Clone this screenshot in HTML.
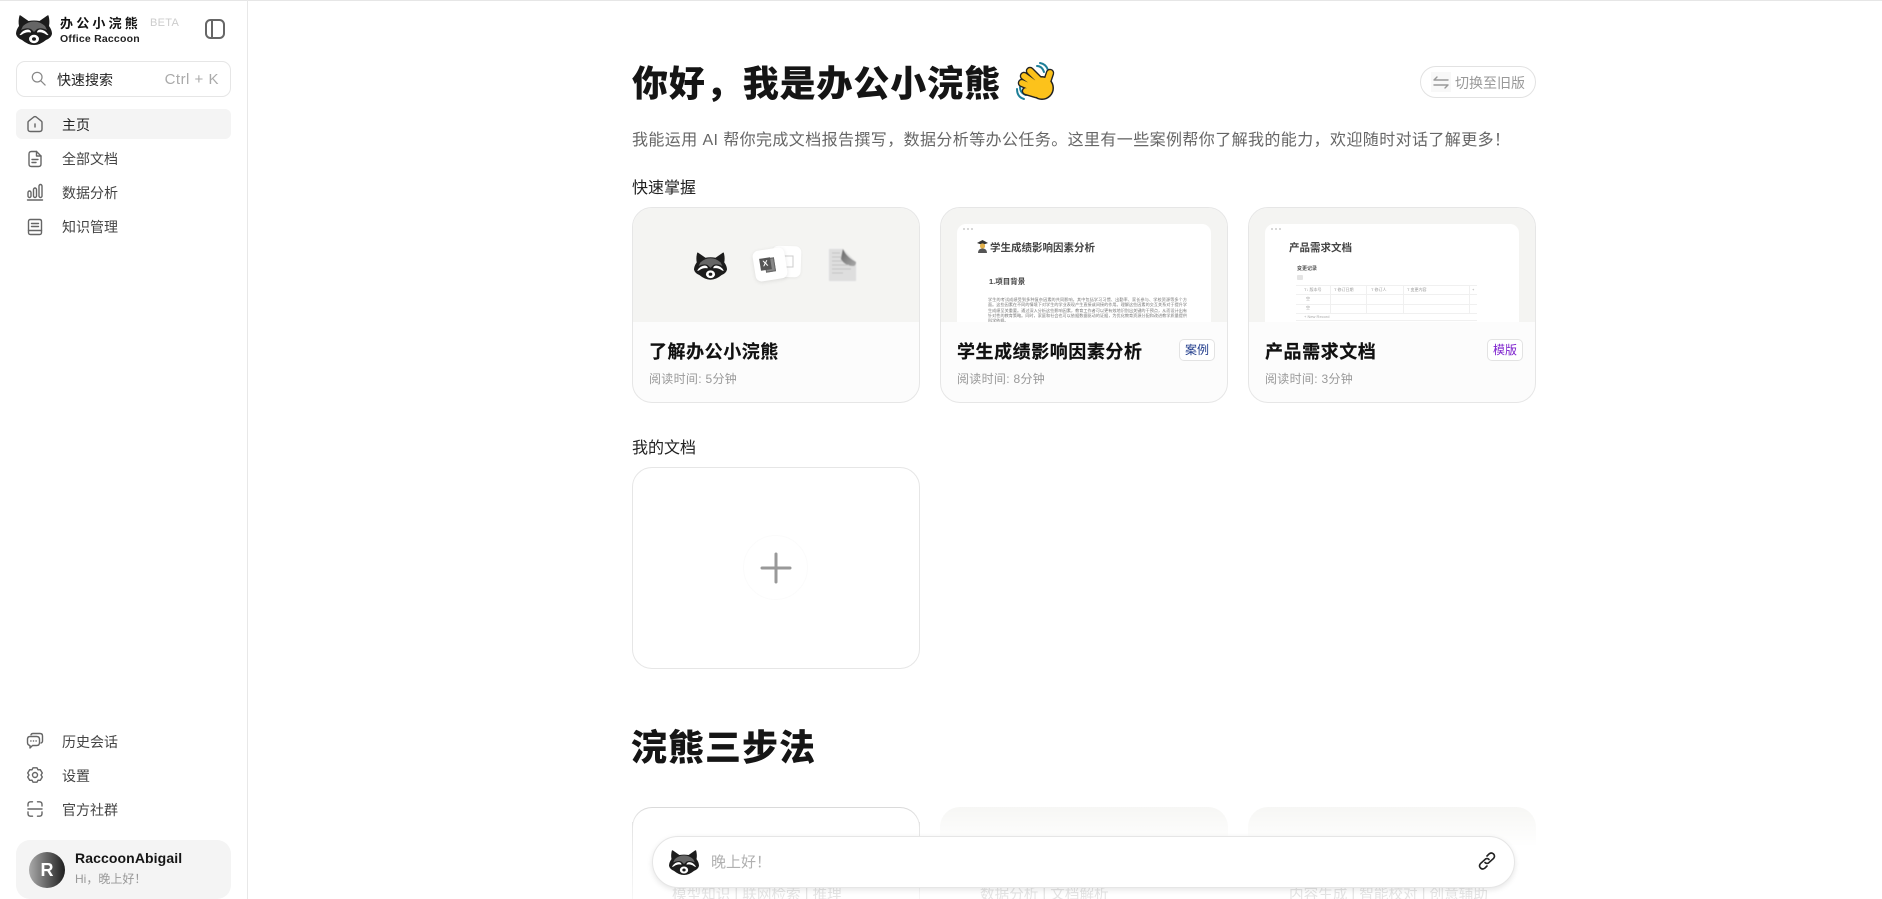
<!DOCTYPE html>
<html lang="zh"><head><meta charset="utf-8"><title>办公小浣熊</title>
<style>
*{box-sizing:border-box;margin:0;padding:0}
html,body{width:1882px;height:899px;overflow:hidden;background:#fff}
body{position:relative;font-family:"Liberation Sans","Noto Sans CJK SC",sans-serif;color:#1a1a1a}
.a{position:absolute}
.t{position:absolute;white-space:nowrap;line-height:20px}
.nav{font-size:14px;color:#444;left:62px}
.ic{position:absolute;fill:none;stroke:#666;stroke-width:1.4;stroke-linecap:round;stroke-linejoin:round}
.card{position:absolute;width:288px;height:196px;top:207px;border:1px solid #e6e6e6;border-radius:20px;overflow:hidden;background:#fcfcfc}
.img{position:absolute;left:0;top:0;width:100%;height:114px;background:#f4f4f2;overflow:hidden}
.ct{position:absolute;left:16px;top:133px;font-size:18px;font-weight:700;line-height:22px;white-space:nowrap;color:#111;letter-spacing:.55px;-webkit-text-stroke:.2px #111}
.cs{position:absolute;left:16px;top:162px;font-size:12px;color:#999;line-height:18px;white-space:nowrap;letter-spacing:.3px}
.tag{position:absolute;top:131px;height:22px;width:36px;border:1px solid #e3e3e3;border-radius:5px;background:#fff;font-size:12px;line-height:20px;text-align:center}
.paper{position:absolute;left:16px;top:16px;width:254px;height:98px;background:#fff;border-radius:9px 9px 0 0;overflow:hidden}
.dots{position:absolute;left:6px;top:4px;width:14px;height:3px}
.dots i{display:inline-block;width:2px;height:2px;border-radius:50%;background:#ccc;margin-right:2px;vertical-align:top}
.p{position:absolute;font-size:4.1px;line-height:5.3px;color:#777;filter:blur(.25px)}
.mini{position:absolute;font-size:4px;color:#999;white-space:nowrap;line-height:6px;filter:blur(.2px)}
.ln{position:absolute;background:#f0f0f0}
.h1{font-weight:900;color:#151515}
</style></head><body>
<svg width="0" height="0" style="position:absolute"><defs>
<symbol id="rac" viewBox="0 0 36 30">
<path d="M3.5 .5Q4 0 5 .8L12.500 6Q18 5 23.500 6L31 .8Q32 0 32.500 .5Q34 6 33 11Q36 15 36 19Q35 23 30 25Q24 30 18 30Q12 30 6 25Q1 23 0 19Q0 15 3 11Q2 6 3.500 .5Z" fill="#1c1c1c"/>
<path d="M7 11Q12 6.500 18 6.500Q24 6.500 29 11L31 15Q25 12 21 14L18 17L15 14Q11 12 5 15Z" fill="#666"/>
<path d="M3.500 20Q7 14.500 12 14.500Q15 15 15 17.500Q10 16.500 6 19.500Q4.500 20.500 3.500 20Z M32.500 20Q29 14.500 24 14.500Q21 15 21 17.500Q26 16.500 30 19.500Q31.500 20.500 32.500 20Z" fill="#fff"/>
<ellipse cx="18" cy="24" rx="5" ry="4.200" fill="#fff"/><ellipse cx="18" cy="24" rx="2" ry="1.800" fill="#1c1c1c"/>
</symbol></defs></svg>

<div class="a" style="left:0;top:0;width:1882px;height:1px;background:#e6e6e6"></div>
<div class="a" style="left:247px;top:0;width:1px;height:899px;background:#e8e8e8"></div>

<!-- sidebar -->
<svg class="a" style="left:16px;top:15px" width="36" height="30"><use href="#rac"/></svg>
<div class="t" style="left:60px;top:14px;font-size:13px;font-weight:700;letter-spacing:3.2px;color:#111">办公小浣熊</div>
<div class="t" style="left:60px;top:29px;font-size:10.5px;font-weight:700;letter-spacing:.2px;color:#222">Office Raccoon</div>
<div class="t" style="left:150px;top:13px;font-size:11px;letter-spacing:.3px;color:#ccc">BETA</div>
<svg class="ic" style="left:204px;top:18px;stroke-width:2" width="22" height="22" viewBox="0 0 22 22"><rect x="2" y="2" width="18" height="18" rx="4.500"/><path d="M8 2V20"/></svg>

<div class="a" style="left:16px;top:61px;width:215px;height:36px;border:1px solid #e6e6e6;border-radius:9px"></div>
<svg class="ic" style="left:31px;top:71px;stroke:#888" width="15" height="15" viewBox="0 0 17 17"><circle cx="7" cy="7" r="5.500"/><path d="M11 11L16 16"/></svg>
<div class="t" style="left:57px;top:70px;font-size:14px;color:#222">快速搜索</div>
<div class="t" style="right:1663px;top:70px;font-size:15px;color:#aaa;letter-spacing:.5px">Ctrl + K</div>

<div class="a" style="left:16px;top:109px;width:215px;height:30px;background:#f4f4f4;border-radius:6px"></div>
<svg class="ic" style="left:26px;top:115px" width="18" height="18" viewBox="0 0 18 18"><path d="M2 7.500Q2 6.500 3 5.800L7.800 2Q9 1.200 10.200 2L15 5.800Q16 6.500 16 7.500V14Q16 16.500 13.500 16.500H4.500Q2 16.500 2 14Z"/><path d="M9 9V12"/></svg>
<div class="t nav" style="top:115px;color:#222">主页</div>
<svg class="ic" style="left:26px;top:150px" width="18" height="18" viewBox="0 0 18 18"><path d="M3 4Q3 1.500 5.500 1.500H10.500L15 6V14Q15 16.500 12.500 16.500H5.500Q3 16.500 3 14Z"/><path d="M10.500 1.500V6H15"/><path d="M6 9.500H12M6 12.500H10"/></svg>
<div class="t nav" style="top:149px">全部文档</div>
<svg class="ic" style="left:26px;top:183px" width="18" height="18" viewBox="0 0 18 18"><rect x="2" y="8" width="3" height="6.500" rx="1.500"/><rect x="7.500" y="5" width="3" height="9.500" rx="1.500"/><rect x="13" y="1.500" width="3" height="13" rx="1.500"/><path d="M1.500 17H16.500"/></svg>
<div class="t nav" style="top:183px">数据分析</div>
<svg class="ic" style="left:26px;top:218px" width="18" height="18" viewBox="0 0 18 18"><path d="M4.500 1.500H13.500Q15.500 1.500 15.500 3.500V14.500Q15.500 16.500 13.500 16.500H4.500Q2.500 16.500 2.500 14.500V3.500Q2.500 1.500 4.500 1.500Z"/><path d="M5.500 5.500H12.500M5.500 8.500H12.500M2.500 12.500H15.500"/></svg>
<div class="t nav" style="top:217px">知识管理</div>

<svg class="ic" style="left:26px;top:732px" width="18" height="18" viewBox="0 0 18 18"><path d="M5 2.800Q5.500 1.500 7 1.500H14Q16.500 1.500 16.500 4V9Q16.500 10.500 15 11"/><path d="M4 4.500H10.500Q13.500 4.500 13.500 7.500V10.500Q13.500 13.500 10.500 13.500H6.500L4 16V13.500Q1.500 13 1.500 10.500V7.500Q1.500 4.500 4 4.500Z"/><path d="M4.800 9H5M7.400 9H7.600M10 9H10.200"/></svg>
<div class="t nav" style="top:732px">历史会话</div>
<svg class="ic" style="left:26px;top:766px" width="18" height="18" viewBox="0 0 18 18"><path d="M7 1.800H11L12 3.800L14.300 3.700L16.300 7L15 9L16.300 11L14.300 14.300L12 14.200L11 16.200H7L6 14.200L3.700 14.300L1.700 11L3 9L1.700 7L3.700 3.700L6 3.800Z"/><circle cx="9" cy="9" r="2.500"/></svg>
<div class="t nav" style="top:766px">设置</div>
<svg class="ic" style="left:26px;top:800px" width="18" height="18" viewBox="0 0 18 18"><path d="M2 6V4.500Q2 1.800 4.500 1.800H6.500M11.500 1.800H13.500Q16 1.800 16 4.500V6M2 12V13.500Q2 16.200 4.500 16.200H6.500M11.500 16.200H13.500Q16 16.200 16 13.500V12M2 9H16"/></svg>
<div class="t nav" style="top:800px">官方社群</div>

<div class="a" style="left:16px;top:840px;width:215px;height:59px;background:#f4f4f4;border-radius:14px"></div>
<div class="a" style="left:29px;top:852px;width:36px;height:36px;border-radius:50%;background:linear-gradient(90deg,#aaa,#1f1f1f);color:#fff;font-weight:700;font-size:18px;line-height:36px;text-align:center">R</div>
<div class="t" style="left:75px;top:848px;font-size:14px;font-weight:700;letter-spacing:.1px;color:#151515">RaccoonAbigail</div>
<div class="t" style="left:75px;top:869px;font-size:12px;color:#999">Hi，晚上好！</div>

<!-- main -->
<div class="t h1" style="left:632px;top:63px;font-size:36px;line-height:42px;letter-spacing:.9px">你好，我是办公小浣熊</div>
<svg class="a" style="left:1008px;top:55px" width="60" height="55" viewBox="0 0 60 55" fill="none" stroke-linecap="round">
<path d="M29 11Q34 11 36 17M32 8Q38 9 40 15M12 32Q12 38 18 40M9 34Q9 42 16 44" stroke="#1d7f98" stroke-width="2"/>
<g stroke="#222" stroke-width="8.500"><path d="M22 16L34 28M16 21L30 31M14 28L28 34M18 36L28 39M42 18L38 30"/></g>
<circle cx="34" cy="33" r="12" fill="#222"/>
<circle cx="34" cy="33" r="10.500" fill="#fcc21b"/>
<g stroke="#fcc21b" stroke-width="5.800"><path d="M22 16L34 28M16 21L30 31M14 28L28 34M18 36L28 39M42 18L38 30"/></g>
</svg>
<div class="a" style="left:1420px;top:66px;width:116px;height:32px;border:1px solid #e2e2e2;border-radius:16px"></div>
<div class="a" style="left:1431px;top:72px;width:20px;height:20px;background:#f8f8f8"></div>
<svg class="ic" style="left:1433px;top:74px;stroke:#999" width="16" height="16" viewBox="0 0 16 16"><path d="M1 6H15M1 6L4 3M1 11H15M15 11L12 14"/></svg>
<div class="t" style="left:1455px;top:73px;font-size:14px;color:#999">切换至旧版</div>

<div class="t" style="left:632px;top:131px;font-size:16px;color:#666;letter-spacing:.4px">我能运用 AI 帮你完成文档报告撰写，数据分析等办公任务。这里有一些案例帮你了解我的能力，欢迎随时对话了解更多！</div>
<div class="t" style="left:632px;top:179px;font-size:16px;color:#222">快速掌握</div>

<div class="card" style="left:632px">
 <div class="img">
  <svg class="a" style="left:61px;top:44px" width="33" height="28"><use href="#rac"/></svg>
  <div class="a" style="left:139px;top:38px;width:29px;height:31px;background:#fff;border-radius:6px;transform:rotate(2deg);box-shadow:0 1px 3px rgba(0,0,0,.06)"></div>
  <svg class="a" style="left:150px;top:47px" width="12" height="13" viewBox="0 0 12 13" fill="none" stroke="#ccc"><rect x="1" y="1" width="9" height="11"/></svg>
  <div class="a" style="left:121px;top:41px;width:32px;height:31px;background:#fff;border-radius:6px;transform:rotate(-9deg);box-shadow:0 1px 4px rgba(0,0,0,.1)"></div>
  <div class="a" style="left:132px;top:50px;width:10px;height:14px;background:#888;transform:rotate(-9deg);border:1px solid #666"></div>
  <div class="a" style="left:127px;top:50px;width:11px;height:12px;background:#555;color:#fff;font:700 8px/12px 'Liberation Sans',sans-serif;text-align:center;transform:rotate(-9deg)">X</div>
  <svg class="a" style="left:196px;top:41px;filter:blur(.4px)" width="27" height="32" viewBox="0 0 27 32"><defs><linearGradient id="dg" x1="0" x2="1" y1="0" y2="1"><stop offset="0" stop-color="#666"/><stop offset="1" stop-color="#aaa"/></linearGradient></defs><path d="M0 0H14L27 13V32H0Z" fill="#dedede"/><path d="M14 0Q17 8 27 13Q27 16 25 17Q16 17 12 10Q13 4 14 0Z" fill="url(#dg)"/><path d="M3 4H11M3 8H12M3 12H13M3 16H20M3 20H22M3 24H14" stroke="#c4c4c4" stroke-width="1"/></svg>
 </div>
 <div class="ct">了解办公小浣熊</div>
 <div class="cs">阅读时间: 5分钟</div>
</div>

<div class="card" style="left:940px">
 <div class="img">
  <div class="paper"><div class="dots"><i></i><i></i><i></i></div>
   <svg class="a" style="left:20px;top:16px;filter:blur(.3px)" width="11" height="13" viewBox="0 0 11 13"><path d="M0 3L5.500 0L11 3L5.500 5Z" fill="#333"/><circle cx="5.500" cy="6" r="2.600" fill="#e2b04a"/><path d="M1 13Q1 8.500 5.500 8.500Q10 8.500 10 13Z" fill="#555"/></svg>
   <div class="t" style="left:33px;top:14px;font-size:10.5px;font-weight:700;color:#444;filter:blur(.2px)">学生成绩影响因素分析</div>
   <div class="t" style="left:32px;top:48px;font-size:7.500px;font-weight:700;color:#444;filter:blur(.2px)">1.项目背景</div>
   <div class="p" style="left:31px;top:73px;width:199px;text-align:justify">学生的考试成绩受到多种复杂因素的共同影响，其中包括学习习惯、出勤率、家长参与、学校资源等多个方面。这些因素在不同的情境下对学生的学业表现产生直接或间接的作用。理解这些因素的交互关系对于提升学生成绩至关重要。通过深入分析这些影响因素，教育工作者可以更有效地识别出关键的干预点，从而设计出有针对性的教育策略。同时，家庭和社会也可以依据数据驱动的证据，为优化教育资源分配和改进教学质量提供科学依据。</div>
  </div>
 </div>
 <div class="ct">学生成绩影响因素分析</div>
 <div class="cs">阅读时间: 8分钟</div>
 <div class="tag" style="left:238px;color:#1e3a8a">案例</div>
</div>

<div class="card" style="left:1248px">
 <div class="img">
  <div class="paper"><div class="dots"><i></i><i></i><i></i></div>
   <div class="t" style="left:24px;top:14px;font-size:10.5px;font-weight:700;color:#444;filter:blur(.2px)">产品需求文档</div>
   <div class="t" style="left:32px;top:35px;font-size:5px;font-weight:700;color:#555;filter:blur(.2px)">变更记录</div>
   <div class="a" style="left:32px;top:51px;width:6px;height:5px;background:#e4e4e4;border-radius:1px"></div>
   <div class="ln" style="left:31px;top:61px;width:181px;height:1px"></div>
   <div class="ln" style="left:31px;top:70px;width:181px;height:1px"></div>
   <div class="ln" style="left:31px;top:80px;width:181px;height:1px"></div>
   <div class="ln" style="left:31px;top:89px;width:181px;height:1px"></div>
   <div class="ln" style="left:31px;top:96px;width:181px;height:1px"></div>
   <div class="ln" style="left:65px;top:61px;width:1px;height:28px"></div>
   <div class="ln" style="left:101px;top:61px;width:1px;height:28px"></div>
   <div class="ln" style="left:138px;top:61px;width:1px;height:28px"></div>
   <div class="ln" style="left:204px;top:61px;width:1px;height:28px"></div>
   <div class="mini" style="left:39px;top:63px">T↓ 版本号</div>
   <div class="mini" style="left:69px;top:63px">T 修订日期</div>
   <div class="mini" style="left:106px;top:63px">T 修订人</div>
   <div class="mini" style="left:142px;top:63px">T 变更内容</div>
   <div class="mini" style="left:207px;top:63px">+</div>
   <div class="mini" style="left:41px;top:72px">空</div>
   <div class="mini" style="left:41px;top:81px">空</div>
   <div class="mini" style="left:39px;top:90px;color:#aaa">+ New Record</div>
  </div>
 </div>
 <div class="ct">产品需求文档</div>
 <div class="cs">阅读时间: 3分钟</div>
 <div class="tag" style="left:238px;color:#7e22ce">模版</div>
</div>

<div class="t" style="left:632px;top:439px;font-size:16px;color:#222">我的文档</div>
<div class="a" style="left:632px;top:467px;width:288px;height:202px;border:1px solid #e6e6e6;border-radius:20px"></div>
<div class="a" style="left:743px;top:535px;width:65px;height:65px;border:1px solid #fbfbfb;border-radius:50%"></div>
<svg class="a" style="left:760px;top:552px" width="32" height="32" fill="none" stroke="#999" stroke-width="3" stroke-linecap="round"><path d="M16 2V30M2 16H30"/></svg>

<div class="t h1" style="left:631px;top:726px;font-size:36px;line-height:44px;letter-spacing:1px">浣熊三步法</div>

<div class="a" style="left:632px;top:807px;width:288px;height:92px;border:1px solid #d8d8d8;border-bottom:0;border-radius:20px 20px 0 0;background:#fff"></div>
<div class="a" style="left:940px;top:807px;width:288px;height:92px;border-radius:20px 20px 0 0;background:#f6f6f4"></div>
<div class="a" style="left:1248px;top:807px;width:288px;height:92px;border-radius:20px 20px 0 0;background:#f6f6f4"></div>
<div class="a" style="left:632px;top:845px;width:904px;height:54px;background:#fff"></div>
<div class="a" style="left:632px;top:807px;width:904px;height:40px;background:linear-gradient(rgba(255,255,255,.05),#fff)"></div>
<div class="a" style="left:632px;top:822px;width:1px;height:77px;background:linear-gradient(#e4e4e4,#f6f6f6)"></div>
<div class="a" style="left:919px;top:822px;width:1px;height:77px;background:linear-gradient(#e4e4e4,#f6f6f6)"></div>
<div class="a" style="left:632px;top:870px;width:904px;height:29px;overflow:hidden">
<div class="t" style="left:40px;top:15px;font-size:14.6px;color:#e4e4e4">模型知识 | 联网检索 | 推理</div>
<div class="t" style="left:348px;top:15px;font-size:14.6px;color:#e4e4e4">数据分析 | 文档解析</div>
<div class="t" style="left:657px;top:15px;font-size:14.6px;color:#e4e4e4">内容生成 | 智能校对 | 创意辅助</div>
</div>

<div class="a" style="left:652px;top:836px;width:863px;height:52px;border:1px solid #e6e6e6;border-radius:26px;background:#fff;box-shadow:0 2px 6px rgba(0,0,0,.1)"></div>
<svg class="a" style="left:669px;top:850px" width="30" height="25"><use href="#rac"/></svg>
<div class="t" style="left:711px;top:853px;font-size:15px;color:#b0b0b0">晚上好！</div>
<svg class="a" style="left:1477px;top:851px" width="20" height="20" viewBox="0 0 20 20" fill="none" stroke="#222" stroke-width="1.600" stroke-linecap="round"><path d="M8 11.500Q9.500 13 11.500 12L16.500 7.500Q18.500 5 16.500 3Q14.500 1 12 3L10 5"/><path d="M12 8.500Q10.500 7 8.500 8L3.500 12.500Q1.500 15 3.500 17Q5.500 19 8 17L10 15"/></svg>
</body></html>
